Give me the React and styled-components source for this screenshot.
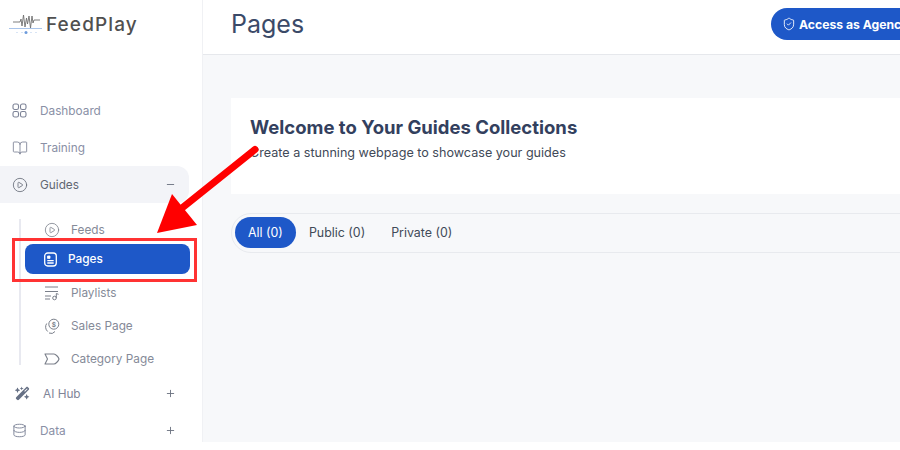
import React from 'react'
import styled, { createGlobalStyle } from 'styled-components'
import { BookOpen, CirclePlay, Database, ShieldCheck, Plus, Minus } from 'lucide-react'
import { FaWandMagicSparkles } from 'react-icons/fa6'

const GlobalStyle = createGlobalStyle`
  html, body {
    margin: 0;
    width: 900px;
    height: 450px;
    overflow: hidden;
    background: #fff;
    font-family: Inter, "Open Sans", "Liberation Sans", sans-serif;
  }
  * { box-sizing: border-box; }
`

function LogoMark() {
  return (
    <svg width="36" height="24" viewBox="0 0 36 24" fill="none">
      <path
        d="M4 10h7l1-3 1 7 1.500-11 1.500 12 1.500-9 1 6 1.500-8 1.500 12 1.500-12 1 7 1-3h6"
        stroke="#6f6f6f"
        strokeWidth="0.9"
      />
      <path d="M0 16.500h33" stroke="#a9c4ea" strokeWidth="1" />
      <circle cx="17" cy="20.500" r="1.500" fill="#6d9bdc" />
      <circle cx="8" cy="20.500" r=".6" fill="#a9c4ea" />
      <circle cx="13" cy="20.500" r=".6" fill="#a9c4ea" />
      <circle cx="22" cy="20.500" r=".6" fill="#a9c4ea" />
      <circle cx="27" cy="20.500" r=".6" fill="#a9c4ea" />
    </svg>
  )
}

function GridIcon() {
  return (
    <svg width="15" height="15" viewBox="0 0 15 15" fill="none" stroke="currentColor" strokeWidth="1.100">
      <rect x="1" y="1" width="5.500" height="5.500" rx="1.800" />
      <rect x="8.500" y="1" width="5.500" height="5.500" rx="1.800" />
      <rect x="1" y="8.500" width="5.500" height="5.500" rx="1.800" />
      <rect x="8.500" y="8.500" width="5.500" height="5.500" rx="1.800" />
    </svg>
  )
}

function PageIcon() {
  return (
    <svg width="15" height="15" viewBox="0 0 15 15" fill="none" stroke="#fff" strokeWidth="1.300">
      <rect x="1.700" y="1" width="11.600" height="13" rx="3" />
      <path d="M4.500 4h2.500v2.400h-2.500z" fill="#fff" strokeWidth=".8" />
      <path d="M4.300 8.600h6.400M4.300 11h6.400" />
    </svg>
  )
}

function PlaylistIcon() {
  return (
    <svg width="16" height="16" viewBox="0 0 16 16" fill="none" stroke="#7a7f8a" strokeWidth="1">
      <path d="M1 2h13M1 6.500h13M1 11h6M1 14h5" />
      <circle cx="10.500" cy="13" r="1.800" />
      <path d="M12.300 13V8.500l2.200.8" />
    </svg>
  )
}

function SalesIcon() {
  return (
    <svg width="16" height="16" viewBox="0 0 16 16" fill="none" stroke="#7a7f8a" strokeWidth="1">
      <circle cx="9.800" cy="6.200" r="5" />
      <path d="M2.700 5.500a6 6 0 0 0 1 8M5 15a5 5 0 0 0 6 -1.500" />
      <text x="9.800" y="8.600" fontSize="6.500" fontWeight="700" textAnchor="middle" fill="#7a7f8a" stroke="none">$</text>
    </svg>
  )
}

function CategoryIcon() {
  return (
    <svg width="16" height="14" viewBox="0 0 16 14" fill="none" stroke="#7a7f8a" strokeWidth="1.100">
      <path d="M1 2h9c1.500 0 4.500 3 5 5-.5 2-3.500 5-5 5H1l2.500-5z" strokeLinejoin="round" />
    </svg>
  )
}

function Row({ icon, label, sign, open }) {
  return (
    <NavRow $open={open}>
      <IconSlot>{icon}</IconSlot>
      <NavLabel $open={open}>{label}</NavLabel>
      {sign === 'plus' && <Sign><Plus size={11} /></Sign>}
      {sign === 'minus' && <Sign><Minus size={11} /></Sign>}
    </NavRow>
  )
}

export default function App() {
  return (
    <Shell>
      <GlobalStyle />
      <Sidebar>
        <Brand>
          <LogoMark />
          <BrandName>FeedPlay</BrandName>
        </Brand>
        <Nav>
          <Row icon={<GridIcon />} label="Dashboard" />
          <Row icon={<BookOpen size={16} strokeWidth={1.300} />} label="Training" />
          <Row icon={<CirclePlay size={16} strokeWidth={1.200} />} label="Guides" sign="minus" open />
          <SubList>
            <SubRow $first>
              <CirclePlay size={16} strokeWidth={1.200} />
              Feeds
            </SubRow>
            <ActiveRow>
              <PageIcon />
              Pages
            </ActiveRow>
            <SubRow>
              <PlaylistIcon />
              Playlists
            </SubRow>
            <SubRow>
              <SalesIcon />
              Sales Page
            </SubRow>
            <SubRow>
              <CategoryIcon />
              Category Page
            </SubRow>
          </SubList>
          <HubRow>
            <FaWandMagicSparkles size={15} />
            <HubLabel>AI Hub</HubLabel>
            <Sign><Plus size={11} /></Sign>
          </HubRow>
          <Row icon={<Database size={15} strokeWidth={1.500} />} label="Data" sign="plus" />
        </Nav>
      </Sidebar>
      <Main>
        <Header>
          <Title>Pages</Title>
          <AgencyButton>
            <ShieldCheck size={14} strokeWidth={1.500} />
            Access as Agency
          </AgencyButton>
        </Header>
        <Content>
          <WelcomeCard>
            <CardTitle>Welcome to Your Guides Collections</CardTitle>
            <CardText>Create a stunning webpage to showcase your guides</CardText>
          </WelcomeCard>
          <Tabs>
            <Tab $active>All (0)</Tab>
            <Tab>Public (0)</Tab>
            <Tab>Private (0)</Tab>
          </Tabs>
        </Content>
      </Main>
      <Highlight />
      <ArrowOverlay width="900" height="450" viewBox="0 0 900 450">
        <path d="M255 149.500 182 208" stroke="#ff0000" strokeWidth="7" strokeLinecap="round" />
        <path d="M157 233 172 194 197 225z" fill="#ff0000" />
      </ArrowOverlay>
    </Shell>
  )
}

const Shell = styled.div`
  position: relative;
  display: flex;
  width: 1100px;
  height: 442px;
`

const Sidebar = styled.aside`
  flex: 0 0 203px;
  background: #fff;
  border-right: 1px solid #f0f1f4;
`

const Brand = styled.div`
  display: flex;
  align-items: center;
  gap: 1px;
  height: 46px;
  padding: 2px 0 0 9px;
`

const BrandName = styled.span`
  font-size: 19px;
  font-weight: 500;
  letter-spacing: 1.100px;
  color: #505050;
`

const Nav = styled.nav`
  margin-top: 46px;
  width: 189px;
`

const NavRow = styled.div`
  display: flex;
  align-items: center;
  height: 37px;
  padding: 0 13px 0 12px;
  color: ${p => (p.$open ? '#5f6672' : '#7c8296')};
  background: ${p => (p.$open ? '#f3f4f8' : 'transparent')};
  border-radius: 0 12px 12px 0;
`

const IconSlot = styled.span`
  display: flex;
  width: 28px;
`

const NavLabel = styled.span`
  flex: 1;
  font-size: 11.800px;
  color: ${p => (p.$open ? '#5f6672' : '#8a90a6')};
`

const Sign = styled.span`
  display: flex;
  color: #6b7280;
`

const SubList = styled.div`
  position: relative;
  padding: 17px 0 0 25px;
  width: 190px;
  &::before {
    content: '';
    position: absolute;
    left: 19px;
    top: 16px;
    bottom: 10px;
    width: 2px;
    background: #e8e9f0;
  }
`

const SubRow = styled.div`
  display: flex;
  align-items: center;
  gap: 11px;
  height: ${p => (p.$first ? '20px' : '33px')};
  padding-left: 19px;
  font-size: 11.800px;
  color: #858a98;
  svg {
    flex: 0 0 16px;
    color: #7a7f8a;
  }
`

const ActiveRow = styled.div`
  display: flex;
  align-items: center;
  gap: 10px;
  height: 30px;
  margin: 4px 0 2px;
  padding-left: 18px;
  border-radius: 8px;
  background: #1e58c8;
  color: #fff;
  font-size: 11.800px;
  font-weight: 500;
`

const HubRow = styled.div`
  display: flex;
  align-items: center;
  height: 37px;
  padding: 0 13px 0 15px;
  color: #667085;
`

const HubLabel = styled.span`
  flex: 1;
  margin-left: 13px;
  font-size: 11.800px;
  color: #7f8598;
`

const Main = styled.main`
  flex: 1;
  display: flex;
  flex-direction: column;
  background: #f7f8fa;
`

const Header = styled.header`
  display: flex;
  align-items: flex-start;
  height: 55px;
  padding: 8px 0 0 28px;
  background: #fff;
  border-bottom: 1px solid #e6e8ec;
`

const Title = styled.h1`
  flex: 0 0 540px;
  margin: 0;
  font-size: 25px;
  line-height: 32px;
  font-weight: 400;
  color: #3b4a68;
`

const AgencyButton = styled.button`
  display: flex;
  align-items: center;
  gap: 3px;
  flex: 0 0 auto;
  height: 32px;
  padding: 0 16px 0 11px;
  border: 0;
  border-radius: 16px;
  background: #1e58c8;
  color: #fff;
  font-family: inherit;
  font-size: 12.200px;
  font-weight: 700;
`

const Content = styled.div`
  padding: 43px 0 0 28px;
`

const WelcomeCard = styled.section`
  height: 96px;
  padding: 18px 19px;
  background: #fff;
`

const CardTitle = styled.h2`
  margin: 0;
  font-size: 18.500px;
  line-height: 23px;
  font-weight: 700;
  color: #33405e;
`

const CardText = styled.p`
  margin: 6px 0 0;
  font-size: 12.600px;
  line-height: 16px;
  color: #414a58;
`

const Tabs = styled.div`
  display: flex;
  align-items: flex-start;
  height: 40px;
  margin-top: 19px;
  padding: 3px 3px 0;
  border: 1px solid #e8eaee;
  border-radius: 20px;
`

const Tab = styled.span`
  display: flex;
  align-items: center;
  height: 31px;
  padding: 0 13px;
  border-radius: 16px;
  background: ${p => (p.$active ? '#1e58c8' : 'transparent')};
  color: ${p => (p.$active ? '#fff' : '#414a58')};
  font-size: 12.400px;
`

const Highlight = styled.div`
  position: absolute;
  left: 12px;
  top: 238px;
  width: 185px;
  height: 44px;
  border: 3px solid #ff3333;
`

const ArrowOverlay = styled.svg`
  position: absolute;
  left: 0;
  top: 0;
  pointer-events: none;
`
